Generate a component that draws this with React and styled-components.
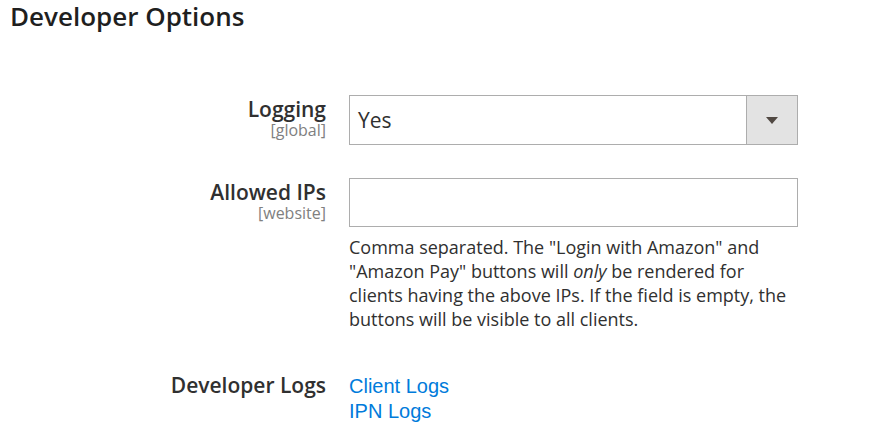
import React from 'react';
import styled, { createGlobalStyle } from 'styled-components';

const GlobalStyle = createGlobalStyle`
  html, body {
    margin: 0;
    padding: 0;
    background: #fff;
  }
  body {
    font-family: 'Open Sans', 'Liberation Sans', sans-serif;
    color: #303030;
  }
`;

const Page = styled.div`
  padding: 2px 10px 0;
  width: 892px;
  box-sizing: border-box;
`;

const Title = styled.h1`
  margin: 0;
  font-size: 26px;
  line-height: 28px;
  font-weight: 600;
  color: #1f1f1f;
`;

const Row = styled.div`
  display: grid;
  grid-template-columns: 316px 449px;
  column-gap: 23px;
  align-items: start;
  margin-top: ${p => p.gap}px;
`;

const Label = styled.div`
  text-align: right;
`;

const LabelText = styled.div`
  font-size: 21px;
  line-height: 28px;
  font-weight: 600;
  color: #303030;
`;

const Scope = styled.div`
  font-size: 16px;
  line-height: 16px;
  margin-top: -1px;
  color: #808080;
`;

const SelectBox = styled.div`
  display: flex;
  height: 50px;
  box-sizing: border-box;
  border: 1px solid #adadad;
  background: #fff;
`;

const SelectValue = styled.div`
  flex: 1;
  display: flex;
  align-items: center;
  padding-left: 8px;
  font-size: 21px;
  color: #303030;
`;

const ArrowCell = styled.div`
  width: 50px;
  border-left: 1px solid #adadad;
  background: #e3e3e3;
  display: flex;
  align-items: center;
  justify-content: center;
`;

const Caret = styled.span`
  width: 0;
  height: 0;
  border-left: 6px solid transparent;
  border-right: 6px solid transparent;
  border-top: 7px solid #514943;
`;

const TextInput = styled.input`
  display: block;
  width: 100%;
  height: 49px;
  box-sizing: border-box;
  border: 1px solid #adadad;
  border-radius: 0;
  outline: none;
  padding: 0 8px;
  font-family: inherit;
  font-size: 20px;
`;

const Note = styled.p`
  margin: 8px 0 0;
  font-size: 18px;
  line-height: 24px;
  color: #303030;
`;

const Links = styled.div`
  display: flex;
  flex-direction: column;
  padding-top: 3px;
`;

const LogLink = styled.a`
  font-family: 'Liberation Sans', Arial, sans-serif;
  font-size: 20px;
  line-height: 25px;
  color: #007bdb;
  text-decoration: none;
`;

export default function App() {
  return (
    <Page>
      <GlobalStyle />
      <Title>Developer Options</Title>

      <Row gap={65}>
        <Label>
          <LabelText>Logging</LabelText>
          <Scope>[global]</Scope>
        </Label>
        <SelectBox>
          <SelectValue>Yes</SelectValue>
          <ArrowCell>
            <Caret />
          </ArrowCell>
        </SelectBox>
      </Row>

      <Row gap={33}>
        <Label>
          <LabelText>Allowed IPs</LabelText>
          <Scope>[website]</Scope>
        </Label>
        <div>
          <TextInput type="text" />
          <Note>
            Comma separated. The "Login with Amazon" and "Amazon Pay" buttons
            will <em>only</em> be rendered for clients having the above IPs. If
            the field is empty, the buttons will be visible to all clients.
          </Note>
        </div>
      </Row>

      <Row gap={40}>
        <Label>
          <LabelText>Developer Logs</LabelText>
        </Label>
        <Links>
          <LogLink href="#">Client Logs</LogLink>
          <LogLink href="#">IPN Logs</LogLink>
        </Links>
      </Row>
    </Page>
  );
}
